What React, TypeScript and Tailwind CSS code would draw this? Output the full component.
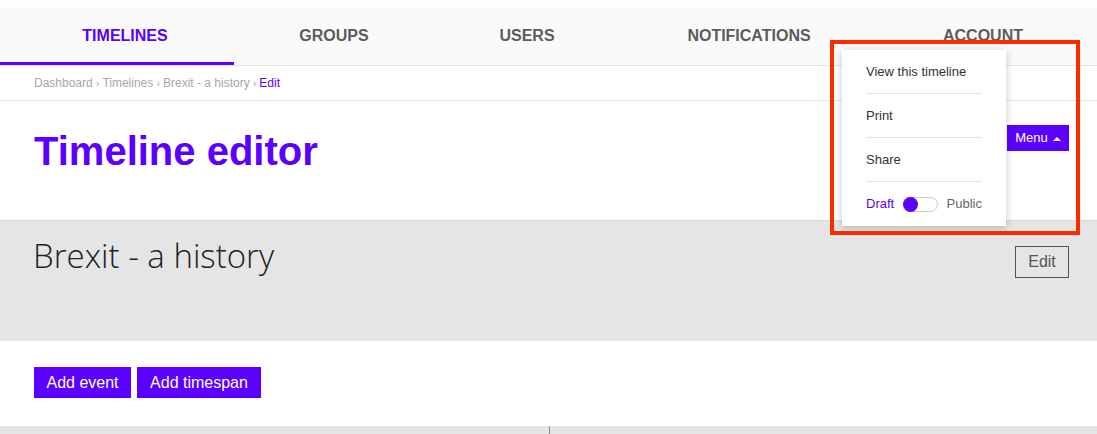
import React from "react";

const purple = "text-[#5b00ff]";

const navItems = [
  { label: "TIMELINES", width: "w-[234px] pl-4", active: true },
  { label: "GROUPS", width: "w-[200px]", active: false },
  { label: "USERS", width: "w-[186px]", active: false },
  { label: "NOTIFICATIONS", width: "w-[258px]", active: false },
  { label: "ACCOUNT", width: "w-[210px]", active: false },
];

function TopNav() {
  return (
    <nav className="mt-[7px] flex h-[59px] border-b border-[#e6e6e6] bg-[#fafafa]">
      {navItems.map((item) => (
        <div
          key={item.label}
          className={`${item.width} flex items-center justify-center text-[16px] font-bold ${
            item.active ? "border-b-[3px] border-[#5b00ff] pt-[3px] text-[#5b00ff]" : "text-[#5c5c5c]"
          }`}
        >
          {item.label}
        </div>
      ))}
    </nav>
  );
}

function Breadcrumb() {
  const sep = <span className="mx-[3px] text-[11px]">›</span>;
  return (
    <div className="flex h-[35px] items-center border-b border-[#e6e6e6] px-[34px] text-[12px] text-[#a8a8a8]">
      <span>Dashboard</span>
      {sep}
      <span>Timelines</span>
      {sep}
      <span>Brexit - a history</span>
      {sep}
      <span className={purple}>Edit</span>
    </div>
  );
}

function MenuDropdown() {
  return (
    <div className="absolute left-[842px] top-[50px] z-10 w-[164px] bg-white px-6 text-[13px] text-[#333] shadow-[0_2px_8px_rgba(0,0,0,0.22)]">
      <div className="flex h-[44px] items-center border-b border-[#e3e3e3]">View this timeline</div>
      <div className="flex h-[44px] items-center border-b border-[#e3e3e3]">Print</div>
      <div className="flex h-[44px] items-center border-b border-[#e3e3e3]">Share</div>
      <div className="flex h-[44px] items-center">
        <span className={purple}>Draft</span>
        <span className="relative ml-[9px] mr-[9px] h-[15px] w-[36px] rounded-full border border-[#c8c8c8] bg-white">
          <span className="absolute left-[-1px] top-[-1px] h-[15px] w-[15px] rounded-full bg-[#5b00ff]" />
        </span>
        <span className="text-[#666]">Public</span>
      </div>
    </div>
  );
}

export default function App() {
  return (
    <div
      className="relative h-[434px] w-[1097px] overflow-hidden bg-white"
      style={{ fontFamily: '"Liberation Sans", Arial, sans-serif' }}
    >
      <TopNav />
      <Breadcrumb />

      <div className="flex h-[119px] items-start justify-between px-[28px] pl-[34px]">
        <h1 className={`mt-[27px] text-[40px] font-bold leading-[46px] ${purple}`}>Timeline editor</h1>
        <button className="mt-[24px] flex h-[26px] w-[62px] items-center justify-center gap-[5px] bg-[#5b00ff] text-[13px] text-white">
          Menu
          <svg width="8" height="5" viewBox="0 0 8 5">
            <path d="M0 5 L4 1 L8 5 Z" fill="white" />
          </svg>
        </button>
      </div>

      <section className="flex h-[121px] items-start justify-between border-t border-[#d9d9d9] bg-[#e5e5e5] pl-[33px] pr-[28px]">
        <h2
          className="mt-[14px] text-[33px] font-light leading-[42px] text-[#222]"
          style={{ fontFamily: '"Open Sans", "Liberation Sans", sans-serif' }}
        >
          Brexit - a history
        </h2>
        <button className="mt-[25px] h-[32px] w-[54px] border border-[#555] text-[16px] text-[#555]">Edit</button>
      </section>

      <div className="flex h-[85px] items-center gap-[6px] pl-[34px]">
        <button className="-mt-[2px] h-[31px] w-[97px] bg-[#5b00ff] text-[16px] text-white">Add event</button>
        <button className="-mt-[2px] h-[31px] w-[124px] bg-[#5b00ff] text-[16px] text-white">Add timespan</button>
      </div>

      <div className="grid h-[10px] grid-cols-[550px_1fr] bg-[#e5e5e5]">
        <div className="border-r border-[#8a8a8a]" />
        <div />
      </div>

      <MenuDropdown />

      {/* annotation box */}
      <div className="absolute left-[830px] top-[40px] z-20 h-[195px] w-[250px] border-[4px] border-[#ff2b00]" />
    </div>
  );
}
